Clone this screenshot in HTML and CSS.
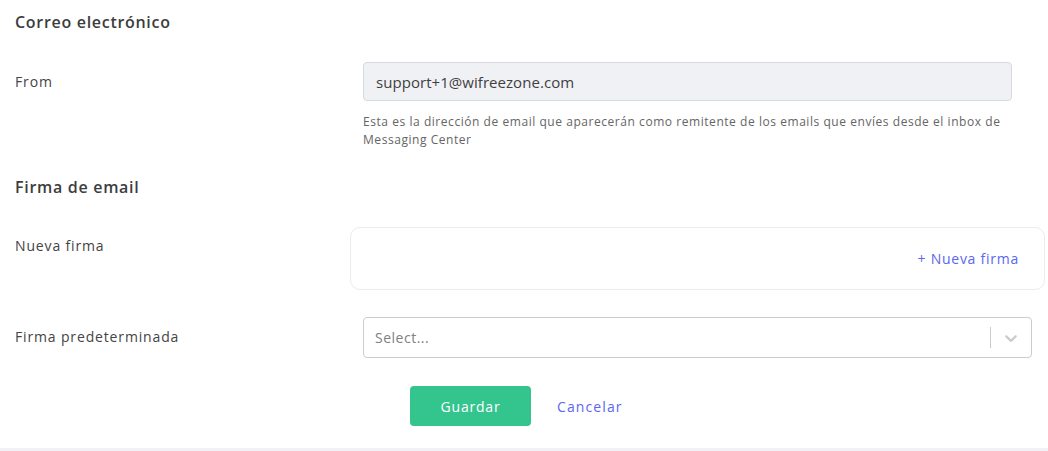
FILE: index.html
```html
<!DOCTYPE html>
<html lang="es">
<head>
<meta charset="utf-8">
<title>Correo electrónico</title>
<link rel="stylesheet" href="styles.css">
</head>
<body>
<div class="page">
  <section class="section">
    <h2 class="section-title">Correo electrónico</h2>
    <div class="row row-from">
      <div class="label">From</div>
      <div class="control">
        <div class="input input-disabled">support+1@wifreezone.com</div>
        <p class="help">Esta es la dirección de email que aparecerán como remitente de los emails que envíes desde el inbox de Messaging Center</p>
      </div>
    </div>
  </section>
  <section class="section">
    <h2 class="section-title title-firma">Firma de email</h2>
    <div class="row row-nueva">
      <div class="label">Nueva firma</div>
      <div class="control control-wide">
        <div class="firma-box">
          <a class="link" href="#">+ Nueva firma</a>
        </div>
      </div>
    </div>
    <div class="row row-select">
      <div class="label">Firma predeterminada</div>
      <div class="control control-select">
        <div class="select">
          <span class="placeholder">Select...</span>
          <span class="indicators">
            <span class="sep"></span>
            <svg class="chev" width="20" height="20" viewBox="0 0 20 20"><path d="M4.516 7.548c0.436-0.446 1.043-0.481 1.576 0l3.908 3.747 3.908-3.747c0.533-0.481 1.141-0.446 1.574 0 0.436 0.445 0.408 1.197 0 1.615-0.406 0.418-4.695 4.502-4.695 4.502-0.217 0.223-0.502 0.335-0.787 0.335s-0.57-0.112-0.789-0.335c0 0-4.287-4.084-4.695-4.502s-0.436-1.170 0-1.615z" fill="#cccccc"/></svg>
          </span>
        </div>
      </div>
    </div>
    <div class="actions">
      <button class="btn-save" type="button">Guardar</button>
      <a class="link link-cancel" href="#">Cancelar</a>
    </div>
  </section>
  <div class="footer-strip"></div>
</div>
</body>
</html>
```

FILE: styles.css
```css
* { box-sizing: border-box; }
html, body { margin: 0; padding: 0; background: #ffffff; }
body {
  font-family: "Open Sans", "Noto Sans", sans-serif;
  color: #444444;
  width: 1048px;
  height: 451px;
  overflow: hidden;
}
.page {
  display: flex;
  flex-direction: column;
  height: 451px;
}
.section { padding: 0 15px; }
.section-title {
  margin: 0;
  font-size: 16px;
  font-weight: 600;
  color: #3d3d3d;
  line-height: 20px;
  padding-top: 12px;
  letter-spacing: 0.7px;
}
.title-firma { padding-top: 0; margin-top: 0; }
.row {
  display: flex;
  align-items: flex-start;
}
.label {
  width: 348px;
  flex: none;
  font-size: 14px;
  font-weight: 500;
  color: #444444;
  letter-spacing: 0.85px;
}
.control { flex: 1; }
.row-from { margin-top: 30px; }
.row-from .label { padding-top: 10px; }
.row-from .control { padding-right: 21px; }
.input {
  height: 39px;
  border: 1px solid #d6d9df;
  border-radius: 4px;
  padding: 0 12px;
  display: flex;
  align-items: center;
  font-size: 15px;
  color: #3f3f3f;
  letter-spacing: 0.05px;
}
.input-disabled { background: #eff1f5; }
.help {
  margin: 12px 0 0 0;
  font-size: 12px;
  line-height: 18px;
  color: #656565;
  letter-spacing: 0.55px;
}
.section + .section { margin-top: 28px; }
.row-nueva { margin-top: 30px; }
.row-nueva .label { padding-top: 9px; }
.control-wide { margin-left: -13px; margin-right: -12px; }
.firma-box {
  height: 63px;
  border: 1px solid #ececef;
  border-radius: 10px;
  display: flex;
  align-items: center;
  justify-content: flex-end;
  padding-right: 25px;
}
.link {
  color: #5a67ee;
  text-decoration: none;
  font-size: 14px;
  letter-spacing: 0.75px;
}
.row-select { margin-top: 27px; }
.row-select .label { padding-top: 10px; }
.control-select { padding-right: 1px; }
.select {
  height: 41px;
  border: 1px solid #cccccc;
  border-radius: 4px;
  display: flex;
  align-items: center;
  justify-content: space-between;
  padding-left: 11px;
}
.placeholder { font-size: 14px; color: #808080; letter-spacing: 0.5px; }
.indicators { display: flex; align-items: center; height: 100%; }
.sep { width: 1px; height: 21px; background: #cccccc; }
.chev { margin: 0 10px 0 10px; }
.actions {
  display: flex;
  align-items: center;
  margin-top: 28px;
  padding-left: 395px;
  gap: 26px;
}
.btn-save {
  width: 121px;
  height: 40px;
  border: none;
  border-radius: 4px;
  background: #34c48e;
  color: #ffffff;
  font-family: inherit;
  font-size: 14px;
  font-weight: 500;
  letter-spacing: 0.8px;
  cursor: pointer;
}
.link-cancel { font-size: 14px; letter-spacing: 1.1px; }
.footer-strip {
  margin-top: auto;
  height: 3px;
  background: #f2f2f6;
}
```
